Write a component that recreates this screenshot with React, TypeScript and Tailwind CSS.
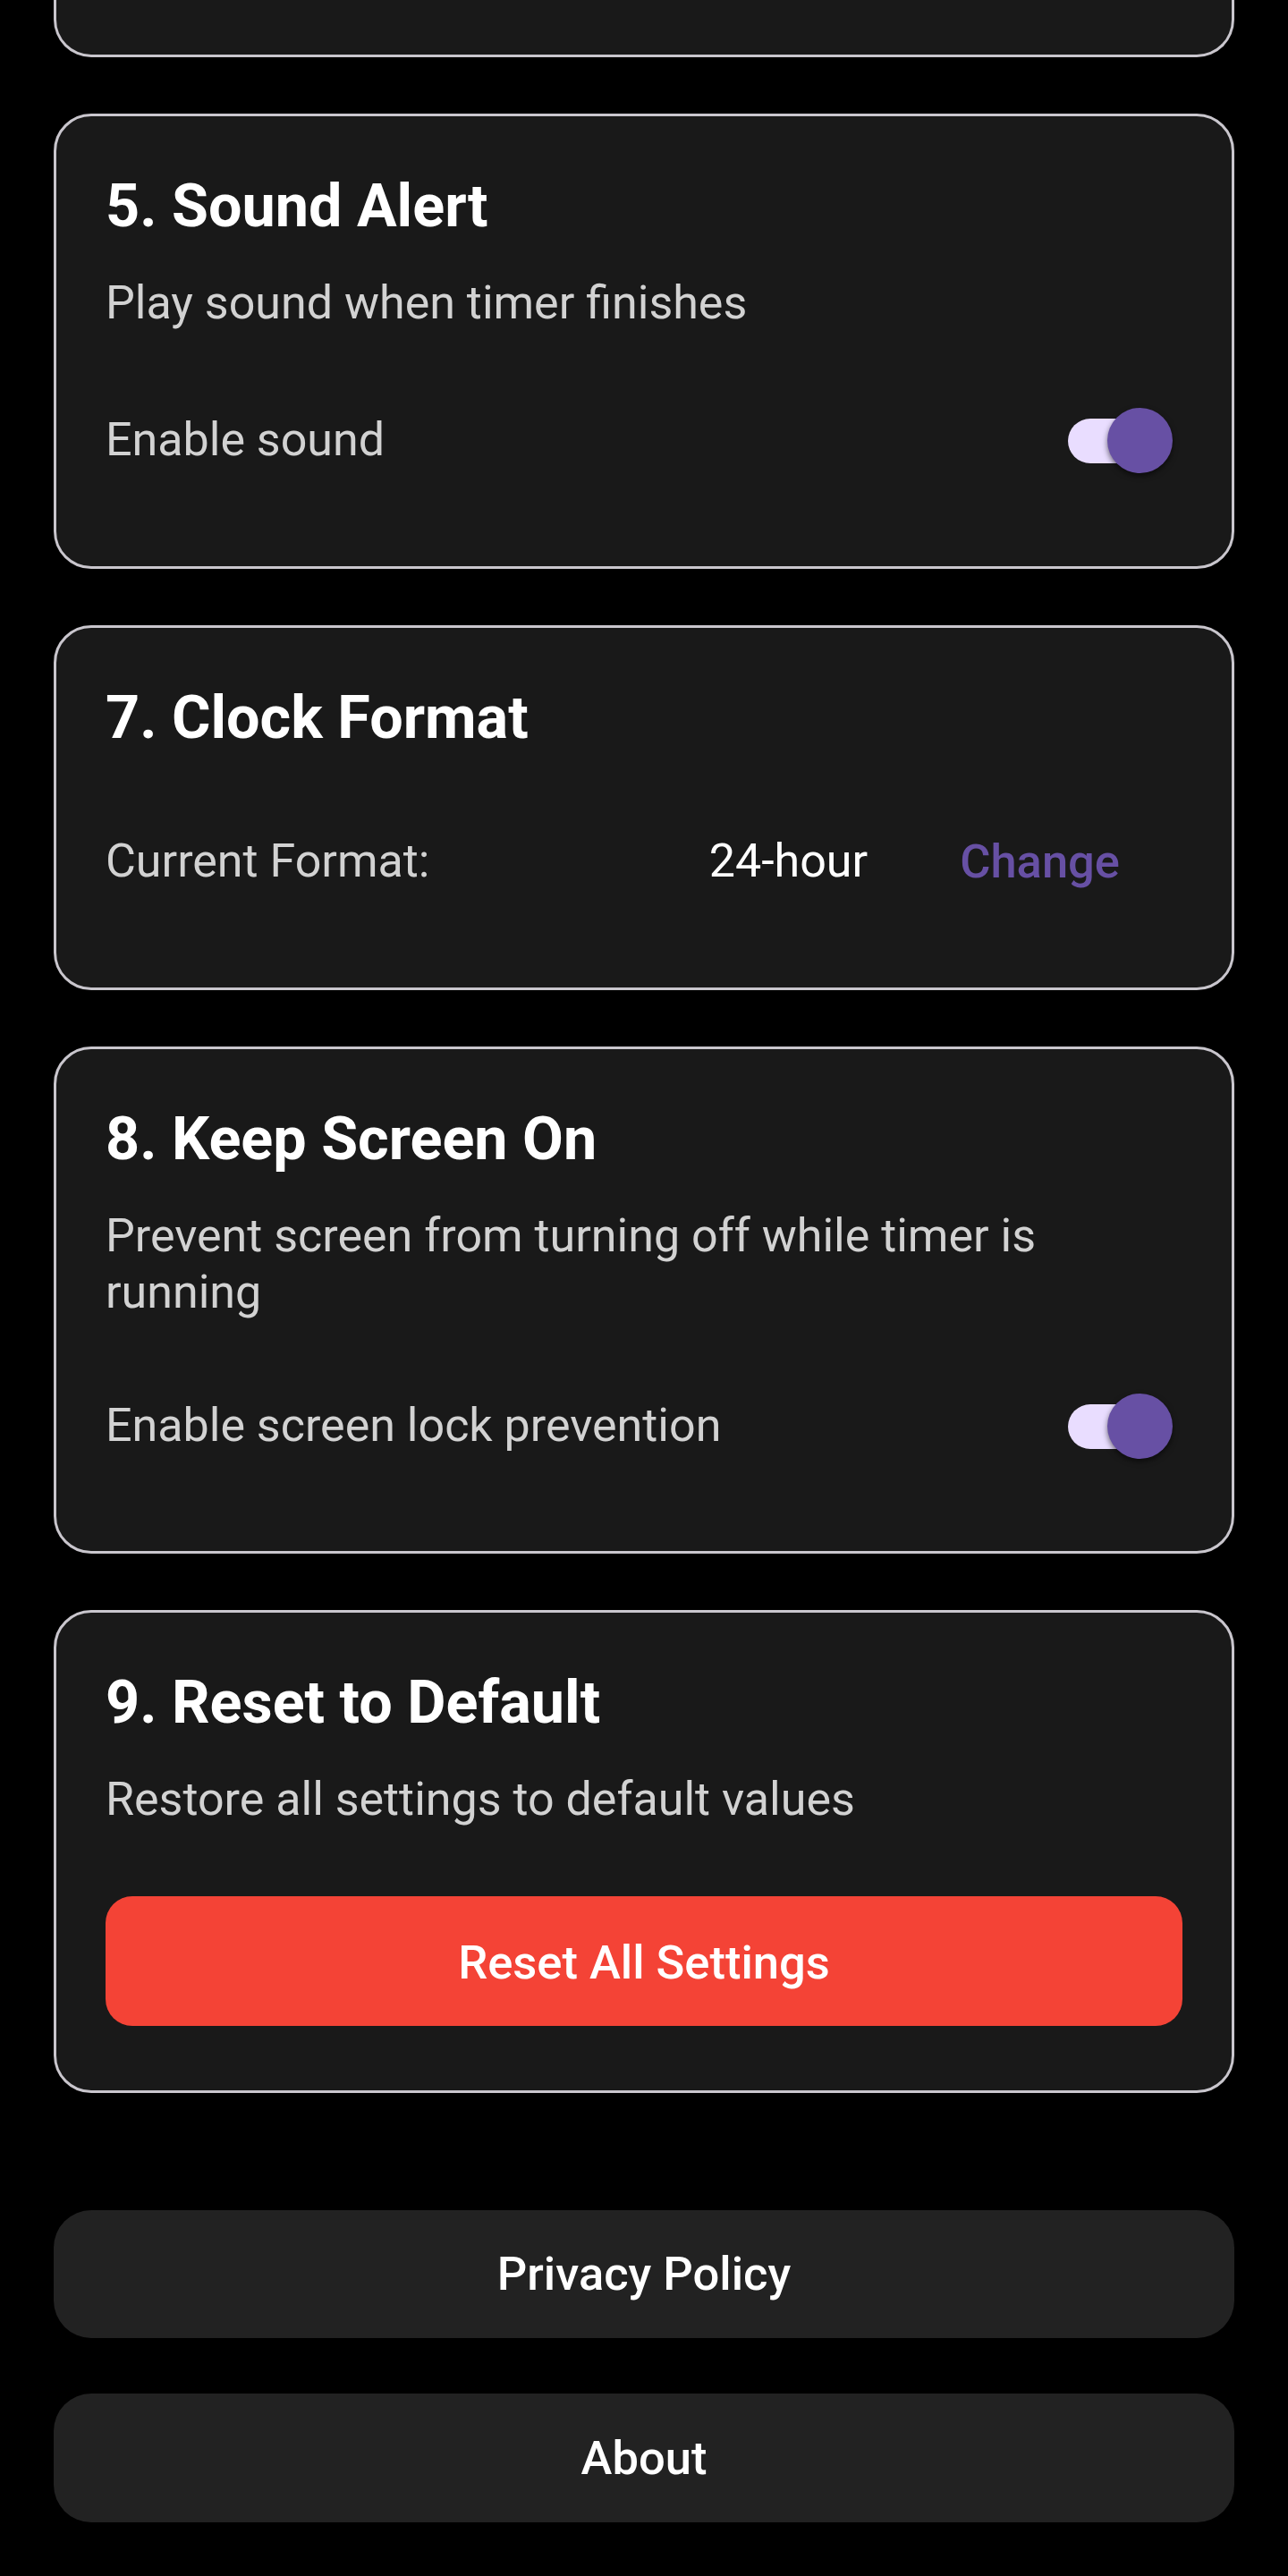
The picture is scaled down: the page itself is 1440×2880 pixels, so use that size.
import { useState } from "react"

function Toggle({ on }: { on: boolean }) {
  return (
    <div className="relative mr-[11px] h-[73px] w-[117px] shrink-0">
      <div
        className={`absolute left-0 top-[12px] h-[50px] w-[100px] rounded-full ${
          on ? "bg-[#e9ddff]" : "bg-[#49454f]"
        }`}
      />
      <div className="absolute right-0 top-0 h-[73px] w-[73px] rounded-full bg-[#6750a4] shadow-[0_3px_6px_rgba(0,0,0,0.55)]" />
    </div>
  )
}

function Card({ title, children }: { title: string; children: React.ReactNode }) {
  return (
    <section className="rounded-[42px] border-[3px] border-[#c9c6cd] bg-[#191919] px-[55px] pt-[60px]">
      <h2 className="text-[66.5px] font-bold leading-[80px] text-white">{title}</h2>
      {children}
    </section>
  )
}

export default function App() {
  const [sound, setSound] = useState(true)
  const [keepOn, setKeepOn] = useState(true)

  return (
    <div className="min-h-[2880px] bg-black px-[60px] font-['Roboto','Liberation_Sans',sans-serif]">
      <div className="flex flex-col gap-[63px]">
        {/* bottom of the card above, scrolled off */}
        <div className="h-[64px] rounded-b-[42px] border-x-[3px] border-b-[3px] border-[#c9c6cd] bg-[#191919]" />

        <Card title="5. Sound Alert">
          <p className="mt-[37px] text-[52px] leading-[63px] text-[#d2d2d2]">Play sound when timer finishes</p>
          <div className="mt-[42px] mb-[61px] flex h-[160px] items-center justify-between" onClick={() => setSound(!sound)}>
            <span className="text-[52px] text-[#d2d2d2]">Enable sound</span>
            <Toggle on={sound} />
          </div>
        </Card>

        <Card title="7. Clock Format">
          <div className="mt-[40px] mb-[60px] flex h-[162px] items-center">
            <span className="flex-1 text-[52px] text-[#d2d2d2]">Current Format:</span>
            <span className="text-[52px] text-white">24-hour</span>
            <button className="ml-[103px] mr-[70px] text-[52.5px] font-medium text-[#6750a4]">Change</button>
          </div>
        </Card>

        <Card title="8. Keep Screen On">
          <p className="mt-[37px] pr-[40px] text-[52px] leading-[63px] text-[#d2d2d2]">
            Prevent screen from turning off while timer is running
          </p>
          <div className="mt-[38px] mb-[60px] flex h-[160px] items-center justify-between" onClick={() => setKeepOn(!keepOn)}>
            <span className="text-[52px] text-[#d2d2d2]">Enable screen lock prevention</span>
            <Toggle on={keepOn} />
          </div>
        </Card>

        <Card title="9. Reset to Default">
          <p className="mt-[37px] text-[52px] leading-[63px] text-[#d2d2d2]">Restore all settings to default values</p>
          <button className="mt-[77px] mb-[72px] flex h-[145px] w-full items-center justify-center rounded-[30px] bg-[#f44336] pt-[4px] text-[52.5px] font-medium text-white">
            Reset All Settings
          </button>
        </Card>
      </div>

      <div className="mt-[131px] flex flex-col gap-[62px]">
        <button className="flex h-[143px] w-full items-center justify-center rounded-[42px] bg-[#222222] text-[52.5px] font-medium text-white">
          Privacy Policy
        </button>
        <button className="flex h-[144px] w-full items-center justify-center rounded-[42px] bg-[#222222] text-[52.5px] font-medium text-white">
          About
        </button>
      </div>
    </div>
  )
}
